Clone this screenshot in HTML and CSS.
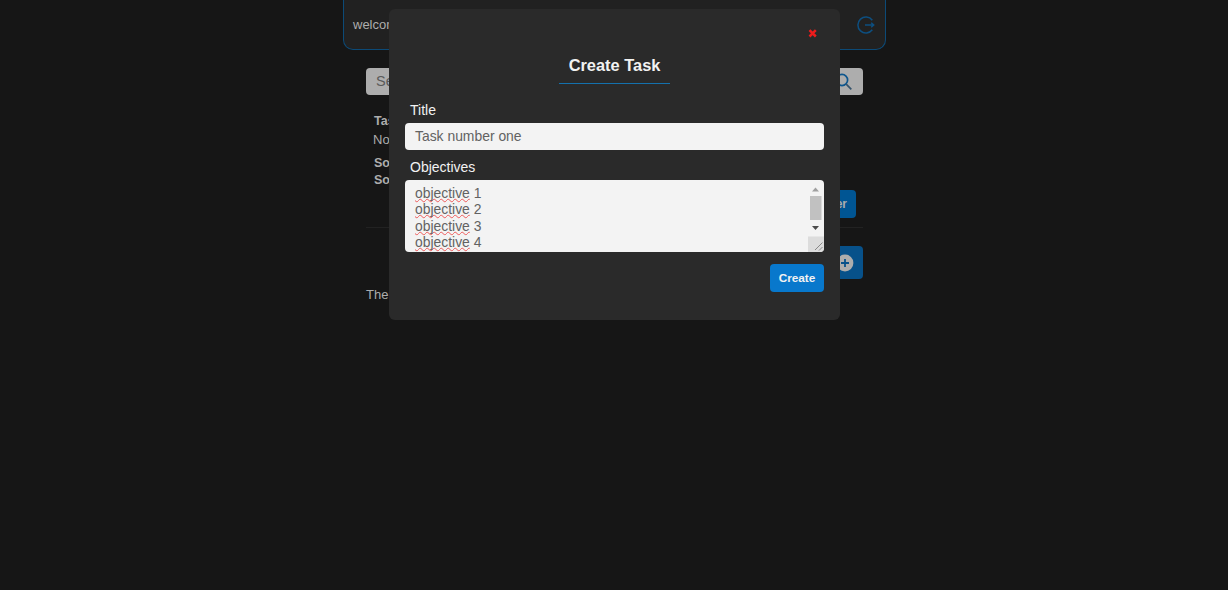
FILE: index.html
```html
<!DOCTYPE html>
<html lang="en">
<head>
<meta charset="utf-8">
<title>Tasks</title>
<link rel="stylesheet" href="styles.css">
</head>
<body>
<main class="page">
  <header class="topbar">
    <span>welcome</span>
    <svg class="logout" viewBox="0 0 20 20" width="20" height="20" fill="none" stroke="#0d4f80" stroke-width="1.5"><path d="M16.3 5.2A8 8 0 1 0 16.3 14.8M9 10H17.5M15.2 7.8L17.7 10L15.2 12.2"/></svg>
  </header>
  <div class="content">
    <div class="search">
      <span>Search</span>
      <svg viewBox="0 0 18 18" width="18" height="18" fill="none" stroke-width="1.7"><circle cx="7" cy="7" r="5.6" stroke="#0d568e"/><path d="M11.2 11.2L16.3 16.3" stroke="#35536b"/></svg>
    </div>
    <section class="filters">
      <div class="fields">
        <b>Task</b>
        <span class="value">No</span>
        <b class="sort">Sort</b>
        <b class="sort-by">Sort</b>
      </div>
      <button class="filter-btn">Filter</button>
    </section>
    <div class="add-row">
      <button class="add-btn"><svg viewBox="0 0 18 18" width="18" height="18"><circle cx="9" cy="9" r="8.4" fill="#adadad"/><path d="M9 5V13M5 9H13" stroke="#07518a" stroke-width="1.8"/></svg></button>
    </div>
    <p class="empty">There</p>
  </div>
</main>
<div class="modal">
  <div class="close"><svg viewBox="0 0 9 9" width="9" height="9"><path d="M1.5 1.2L7.8 7.5M7.8 1.2L1.5 7.5" stroke="#ed1c1c" stroke-width="2.5"/></svg></div>
  <h1>Create Task</h1>
  <div class="label">Title</div>
  <div class="input">Task number one</div>
  <div class="label second">Objectives</div>
  <div class="textarea">
    <div class="lines">
      <div><span class="typo">objective</span> 1</div>
      <div><span class="typo">objective</span> 2</div>
      <div><span class="typo">objective</span> 3</div>
      <div><span class="typo">objective</span> 4</div>
    </div>
    <div class="scroll">
      <svg viewBox="0 0 16 72" width="16" height="72"><path d="M4 11.5L7.5 7.5L11 11.5Z" fill="#a0a0a0"/><rect x="2" y="16" width="11.5" height="24" fill="#c1c1c1"/><path d="M4 46L7.5 50L11 46Z" fill="#4b4b4b"/><rect y="56.5" width="16" height="15.5" fill="#dcdcdc"/><path d="M7 70L14.5 62.5M11 70.5L14.5 67" stroke="#888" stroke-width="1"/></svg>
    </div>
  </div>
  <button class="create-btn">Create</button>
</div>
</body>
</html>
```
FILE: styles.css
```css
* { box-sizing: border-box; }
body {
  margin: 0;
  height: 590px;
  overflow: hidden;
  background: #161616;
  color: #adadad;
  font: 13px/16px "Liberation Sans", Arial, sans-serif;
}
button { font-family: inherit; border: 0; }
svg { display: block; }
.page { width: 543px; margin-left: 343px; }
.topbar {
  height: 50px;
  display: flex;
  justify-content: space-between;
  padding: 17px 9px 0 9px;
  background: #212121;
  border: 1.5px solid #0c4a77;
  border-top: 0;
  border-radius: 0 0 10px 10px;
}
.logout { margin-top: -2px; }
.content { padding: 18px 23px 0; }
.search {
  height: 27px;
  display: flex;
  align-items: center;
  justify-content: space-between;
  padding: 0 10px 1px;
  border-radius: 4px;
  background: #adadad;
  color: #5a5a5a;
  font-size: 14.5px;
}
.search svg { margin-top: 2px; }
.filters {
  height: 133px;
  display: flex;
  justify-content: space-between;
  border-bottom: 1px solid #222;
}
.fields {
  display: flex;
  flex-direction: column;
  padding: 18px 0 0 8px;
  font-size: 12.5px;
}
.value { margin: 3px 0 0 -1px; font-size: 13px; }
.sort { margin-top: 7px; }
.sort-by { margin-top: 1px; }
.filter-btn {
  width: 56px;
  height: 28px;
  margin: 95px 7px 0 0;
  padding: 0 9px 0 0;
  border-radius: 4px;
  background: #005593;
  color: #adadad;
  font-size: 12px;
  font-weight: bold;
  text-align: right;
}
.add-row { display: flex; justify-content: flex-end; padding-top: 18px; }
.add-btn {
  width: 52px;
  height: 33px;
  padding: 0 0 0 25px;
  border-radius: 4px;
  background: #07518a;
}
.empty { margin: 8px 0 0; }

.modal {
  position: absolute;
  left: 389px;
  top: 9px;
  width: 451px;
  height: 311px;
  padding: 20px 16px 0;
  border-radius: 6px;
  background: #2a2a2a;
  color: #f2f2f2;
  display: flex;
  flex-direction: column;
}
.close { align-self: flex-end; height: 9px; margin-right: 7px; }
h1 {
  align-self: center;
  width: 111px;
  height: 28px;
  margin: 18px 0 0;
  border-bottom: 1px solid #1471ad;
  text-align: center;
  font-size: 16.4px;
  line-height: 19px;
  white-space: nowrap;
}
.label { margin: 18px 0 0 5px; font-size: 14px; line-height: 17px; }
.input {
  height: 27px;
  margin-top: 4px;
  padding-left: 10px;
  border-radius: 4px;
  background: #f3f3f3;
  color: #626262;
  font-size: 13.9px;
  line-height: 26px;
}
.second { margin-top: 9px; }
.textarea {
  height: 72px;
  margin-top: 4px;
  display: flex;
  justify-content: space-between;
  overflow: hidden;
  border-radius: 4px;
  background: #f3f3f3;
  color: #626262;
  font-size: 13.9px;
  line-height: 16.3px;
}
.lines { padding: 5px 0 0 10px; }
.typo {
  text-decoration: underline wavy #ee5a5a 1px;
  text-decoration-skip-ink: none;
  text-underline-offset: 0;
}
.create-btn {
  align-self: flex-end;
  width: 54px;
  height: 28px;
  margin-top: 12px;
  padding: 0;
  border-radius: 4px;
  background: #0878cc;
  color: #f2f2f2;
  font-size: 11.8px;
  font-weight: bold;
}
```
